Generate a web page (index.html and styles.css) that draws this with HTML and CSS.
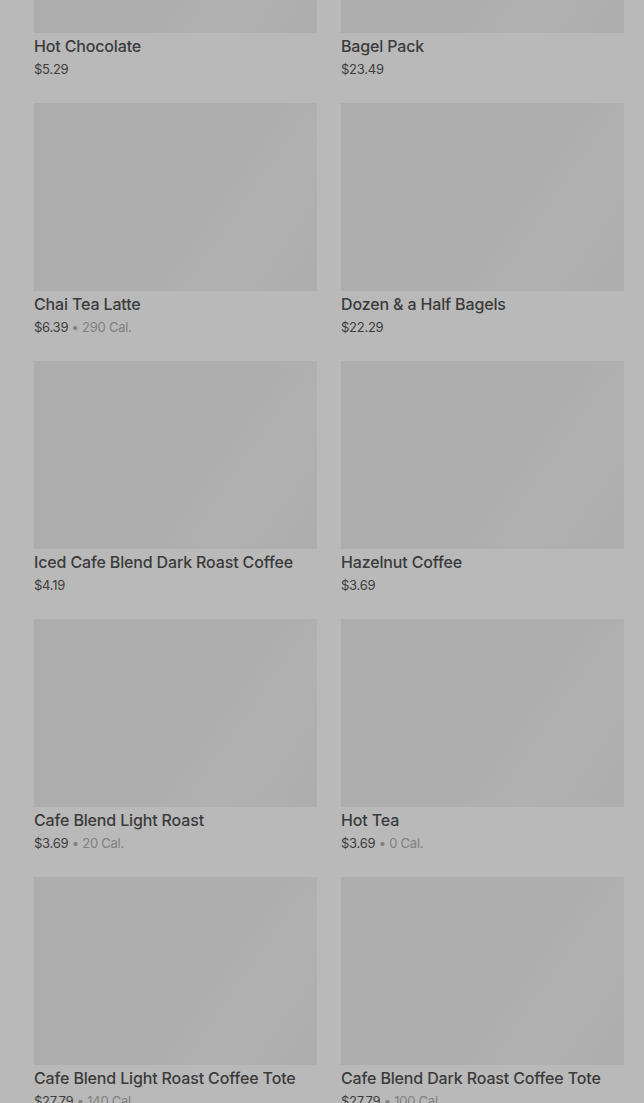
FILE: index.html
```html
<!DOCTYPE html>
<html lang="en">
<head>
<meta charset="utf-8">
<title>Menu</title>
<link rel="stylesheet" href="styles.css">
</head>
<body>
<main class="grid">
  <div class="card"><div class="thumb"></div><div class="name">Hot Chocolate</div><div class="meta">$5.29</div></div>
  <div class="card"><div class="thumb"></div><div class="name">Bagel Pack</div><div class="meta">$23.49</div></div>
  <div class="card"><div class="thumb"></div><div class="name">Chai Tea Latte</div><div class="meta">$6.39<span class="cal"> • 290 Cal.</span></div></div>
  <div class="card"><div class="thumb"></div><div class="name">Dozen &amp; a Half Bagels</div><div class="meta">$22.29</div></div>
  <div class="card"><div class="thumb"></div><div class="name">Iced Cafe Blend Dark Roast Coffee</div><div class="meta">$4.19</div></div>
  <div class="card"><div class="thumb"></div><div class="name">Hazelnut Coffee</div><div class="meta">$3.69</div></div>
  <div class="card"><div class="thumb"></div><div class="name">Cafe Blend Light Roast</div><div class="meta">$3.69<span class="cal"> • 20 Cal.</span></div></div>
  <div class="card"><div class="thumb"></div><div class="name">Hot Tea</div><div class="meta">$3.69<span class="cal"> • 0 Cal.</span></div></div>
  <div class="card"><div class="thumb"></div><div class="name">Cafe Blend Light Roast Coffee Tote</div><div class="meta">$27.79<span class="cal"> • 140 Cal.</span></div></div>
  <div class="card"><div class="thumb"></div><div class="name">Cafe Blend Dark Roast Coffee Tote</div><div class="meta">$27.79<span class="cal"> • 100 Cal.</span></div></div>
</main>
</body>
</html>
```
FILE: styles.css
```css
html, body {
  margin: 0;
  padding: 0;
  background: #b9b9b9;
  overflow: hidden;
  height: 100%;
}
body {
  font-family: Inter, "Liberation Sans", sans-serif;
  color: #3a3a3a;
}
.grid {
  display: grid;
  grid-template-columns: 283px 283px;
  column-gap: 24px;
  row-gap: 23px;
  padding: 0 20px 0 34px;
  margin-top: -155px;
}
.card {
  display: flex;
  flex-direction: column;
}
.thumb {
  height: 188px;
  background: linear-gradient(125deg, #adadad 0%, #adadad 55%, #b1b1b1 75%, #adadad 100%);
}
.name {
  margin-top: 2px;
  font-size: 16px;
  font-weight: 500;
  line-height: 22px;
  letter-spacing: -0.15px;
  color: #3b3b3b;
  white-space: nowrap;
}
.meta {
  padding-top: 1px;
  font-size: 13px;
  line-height: 22px;
  letter-spacing: -0.25px;
  color: #3d3d3d;
}
.cal {
  color: #808080;
}
```
